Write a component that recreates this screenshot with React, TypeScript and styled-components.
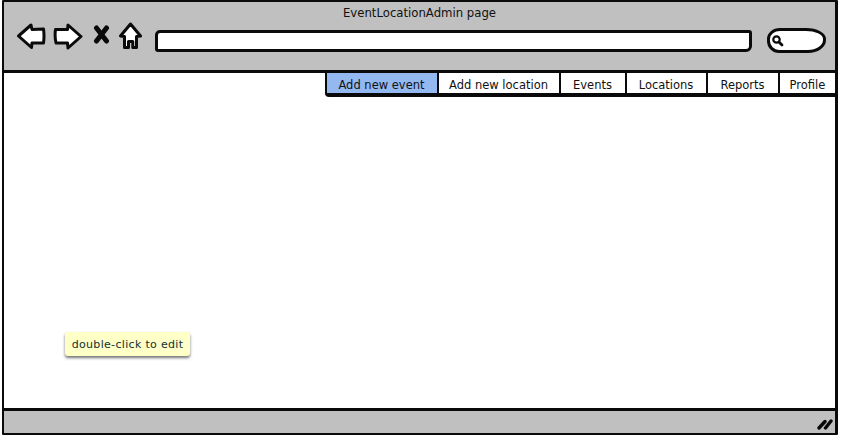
import React from "react";
import styled, { createGlobalStyle } from "styled-components";

const Global = createGlobalStyle`
  html, body { margin: 0; padding: 0; background: #fff; }
  #root { width: 844px; height: 436px; overflow: hidden; }
`;

const Page = styled.div`
  width: 844px;
  height: 436px;
  box-sizing: border-box;
  padding: 0 6px 1px 2px;
  font-family: "DejaVu Sans", sans-serif;
  color: #111;
`;

const Win = styled.div`
  height: 100%;
  box-sizing: border-box;
  border: 3px solid #0a0a0a;
  border-top-width: 2px;
  border-left-width: 2px;
  border-bottom-width: 2px;
  border-radius: 1px;
  display: flex;
  flex-direction: column;
  background: #fff;
`;

const Header = styled.header`
  height: 71px;
  flex: none;
  box-sizing: border-box;
  background: #c0c0c0;
  border-bottom: 3px solid #0a0a0a;
  padding: 4px 9px 0 12px;
`;

const Title = styled.div`
  text-align: center;
  font-size: 11.7px;
  line-height: 15px;
  height: 15px;
  padding-right: 3px;
`;

const Toolbar = styled.div`
  display: flex;
  align-items: center;
  height: 30px;
`;

const NavIcon = styled.svg<{ $gap: number; $lift?: number }>`
  display: block;
  flex: none;
  margin-right: ${(p) => p.$gap}px;
  margin-bottom: ${(p) => p.$lift ?? 0}px;
`;

const Address = styled.div`
  flex: 1;
  height: 16px;
  margin-top: 9px;
  margin-left: 1px;
  background: #fff;
  border: 3px solid #0a0a0a;
  border-radius: 5px 3px 6px 3px;
`;

const Search = styled.div`
  flex: none;
  width: 52px;
  height: 19px;
  margin: 8px 0 0 15px;
  background: #fff;
  border: 3px solid #0a0a0a;
  border-radius: 13px 20px 18px 12px / 11px 11px 13px 12px;
  display: flex;
  align-items: center;
  padding-left: 1px;
  box-sizing: content-box;
`;

const Content = styled.main`
  flex: 1;
  position: relative;
`;

const Tabs = styled.nav`
  display: flex;
  justify-content: flex-end;
`;

const TabList = styled.div`
  display: flex;
  height: 20px;
  border-bottom: 4px solid #0a0a0a;
  border-left: 2px solid #0a0a0a;
  border-bottom-left-radius: 4px;
`;

const Tab = styled.div<{ $w: number; $active?: boolean }>`
  width: ${(p) => p.$w}px;
  box-sizing: border-box;
  display: flex;
  align-items: center;
  justify-content: center;
  padding: 3px 1px 0 0;
  font-size: 11.5px;
  background: ${(p) => (p.$active ? "#94b8f0" : "#fff")};
  border-right: 2px solid #0a0a0a;
  &:last-child { border-right: none; padding-right: 0; }
`;

const Tooltip = styled.div`
  position: absolute;
  left: 61px;
  top: 259px;
  width: 125px;
  height: 24px;
  box-sizing: border-box;
  display: flex;
  align-items: center;
  justify-content: center;
  background: #ffffc8;
  color: #123030;
  font-size: 11px;
  letter-spacing: 0.32px;
  border-radius: 3px;
  box-shadow: 0 2px 3px rgba(0, 0, 0, 0.55);
`;

const Footer = styled.footer`
  height: 25px;
  flex: none;
  box-sizing: border-box;
  background: #c0c0c0;
  border-top: 3px solid #0a0a0a;
  display: flex;
  align-items: center;
  justify-content: flex-end;
  padding: 3px 2px 0 0;
`;

const stroke = { stroke: "#0a0a0a", strokeWidth: 3, strokeLinejoin: "round" as const, fill: "#fff" };

export default function App() {
  return (
    <Page>
      <Global />
      <Win>
        <Header>
          <Title>EventLocationAdmin page</Title>
          <Toolbar>
            <NavIcon $gap={7} width="30" height="26" viewBox="0 0 30 26">
              <path d="M2.5 13 L15 2 L16 6.5 L27.5 6 Q28.5 13 27.5 20 L16 20 L15.5 24.5 Z" {...stroke} />
            </NavIcon>
            <NavIcon $gap={10} width="30" height="27" viewBox="0 0 30 27">
              <path d="M28 13.5 L15 2 L14.5 6.5 L2.5 6.5 Q1.5 13 3 20 L14.5 20 L15 25 Z" {...stroke} />
            </NavIcon>
            <NavIcon $gap={9} $lift={4} width="17" height="19" viewBox="0 0 17 19">
              <path d="M3.5 3 L13.5 16 M13.5 3 L3.5 16" fill="none" stroke="#0a0a0a" strokeWidth="5" strokeLinecap="round" />
            </NavIcon>
            <NavIcon $gap={12} width="23" height="28" viewBox="0 0 23 28">
              <path d="M11.5 2 L21.5 14 L17.5 14.5 L17.5 25.5 L13.8 25.5 L13.8 19.5 L9.5 19.5 L9.5 25.5 L5.5 25.5 L5.5 14.5 L1.5 14 Z" {...stroke} />
            </NavIcon>
            <Address />
            <Search>
              <svg width="13" height="13" viewBox="0 0 13 13">
                <circle cx="5.5" cy="5.5" r="3.2" fill="none" stroke="#0a0a0a" strokeWidth="2.2" />
                <path d="M8.2 8.2 L11 11" stroke="#0a0a0a" strokeWidth="2.8" strokeLinecap="round" />
              </svg>
            </Search>
          </Toolbar>
        </Header>
        <Content>
          <Tabs>
            <TabList>
              <Tab $w={112} $active>Add new event</Tab>
              <Tab $w={122}>Add new location</Tab>
              <Tab $w={66}>Events</Tab>
              <Tab $w={81}>Locations</Tab>
              <Tab $w={72}>Reports</Tab>
              <Tab $w={55}>Profile</Tab>
            </TabList>
          </Tabs>
          <Tooltip>double-click to edit</Tooltip>
        </Content>
        <Footer>
          <svg width="16" height="13" viewBox="0 0 16 13">
            <path d="M2 11 L8 4.5 M8.5 11 L14 4" stroke="#0a0a0a" strokeWidth="3.4" strokeLinecap="round" />
          </svg>
        </Footer>
      </Win>
    </Page>
  );
}
